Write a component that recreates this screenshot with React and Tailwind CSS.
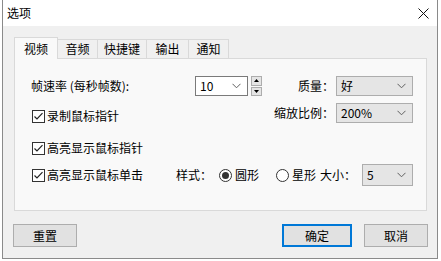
import React from 'react';

const font = { fontFamily: '"Noto Sans CJK SC", "Microsoft YaHei", sans-serif' };

function Chevron() {
  return (
    <svg width="9" height="6" viewBox="0 0 9 6" className="shrink-0">
      <path d="M0.5 0.8 L4.5 4.8 L8.5 0.8" fill="none" stroke="#606060" strokeWidth="1" />
    </svg>
  );
}

function Combo({ value, width, editable, height = 'h-[20px]' }) {
  return (
    <div
      className={`flex items-center justify-between ${height} ${width} pl-[4px] pr-[6px] border ${
        editable ? 'bg-white border-[#7a7a7a]' : 'bg-[#e5e5e5] border-[#adadad]'
      }`}
    >
      <span className="text-[12px] leading-none text-black">{value}</span>
      <Chevron />
    </div>
  );
}

function Spinner() {
  return (
    <div className="flex flex-col gap-[1px] ml-[3px] w-[11px] h-[20px]">
      <div className="flex-1 flex items-center justify-center bg-[#e5e5e5] border border-[#adadad]">
        <svg width="5" height="3" viewBox="0 0 5 3"><path d="M0 3 L2.5 0 L5 3 Z" fill="#000" /></svg>
      </div>
      <div className="flex-1 flex items-center justify-center bg-[#e5e5e5] border border-[#adadad]">
        <svg width="5" height="3" viewBox="0 0 5 3"><path d="M0 0 L2.5 3 L5 0 Z" fill="#000" /></svg>
      </div>
    </div>
  );
}

function Check({ label }) {
  return (
    <div className="flex items-center h-[16px]">
      <div className="w-[13px] h-[13px] border border-[#333] bg-white flex items-center justify-center">
        <svg width="11" height="11" viewBox="0 0 11 11">
          <path d="M1.5 5.5 L4 8 L9.5 2.2" fill="none" stroke="#222" strokeWidth="1.2" />
        </svg>
      </div>
      <span className="ml-[2px] text-[12px] leading-none">{label}</span>
    </div>
  );
}

function Radio({ label, checked }) {
  return (
    <div className="flex items-center">
      <div className="w-[13px] h-[13px] rounded-full border border-[#333] bg-white flex items-center justify-center">
        {checked && <div className="w-[7px] h-[7px] rounded-full bg-[#333]" />}
      </div>
      <span className="ml-[3px] text-[12px] leading-none">{label}</span>
    </div>
  );
}

function Button({ label, primary, width }) {
  return (
    <div
      className={`${width} h-[23px] flex items-center justify-center bg-[#e1e1e1] text-[12px] ${
        primary ? 'border-2 border-[#0078d7]' : 'border border-[#adadad]'
      }`}
    >
      {label}
    </div>
  );
}

export default function App() {
  const tabs = ['音频', '快捷键', '输出', '通知'];
  const tabWidths = ['w-[40px]', 'w-[49px]', 'w-[42px]', 'w-[40px]'];

  return (
    <div className="w-[441px] h-[261px] bg-white text-black" style={font}>
      <div className="ml-[2px] w-[436px] h-[259px] flex flex-col border-x border-b border-[#8a8a8a]">
        {/* Title bar */}
        <div className="h-[26px] shrink-0 bg-white flex items-center justify-between pl-[4px] pr-[8px]">
          <span className="text-[12px] leading-none">选项</span>
          <svg width="11" height="11" viewBox="0 0 11 11">
            <path d="M0.5 0.5 L10.5 10.5 M10.5 0.5 L0.5 10.5" stroke="#111" strokeWidth="1" />
          </svg>
        </div>

        {/* Body */}
        <div className="flex-1 bg-[#f0f0f0] pl-[11px] pr-[10px] pt-[10px]">
          {/* Tabs */}
          <div className="flex items-end h-[22px]">
            <div className="w-[44px] h-[22px] bg-[#f9f9f9] border-x border-t border-[#d9d9d9] flex items-center justify-center text-[12px] relative z-10 -mb-[1px]">
              视频
            </div>
            {tabs.map((t, i) => (
              <div
                key={t}
                className={`${tabWidths[i]} h-[19px] border-t border-r border-[#d9d9d9] flex items-center justify-center text-[12px]`}
              >
                {t}
              </div>
            ))}
          </div>

          {/* Panel */}
          <div className="h-[153px] bg-[#f9f9f9] border border-[#d9d9d9] pl-[16px] pr-[13px] pt-[17px]">
            {/* Row 1 */}
            <div className="flex items-center h-[20px]">
              <span className="text-[12px] leading-none w-[164px]">帧速率 (每秒帧数):</span>
              <Combo value="10" width="w-[53px]" editable />
              <Spinner />
              <span className="ml-auto mr-[2px] text-[12px] leading-none">质量：</span>
              <Combo value="好" width="w-[77px]" />
            </div>

            {/* Row 2 */}
            <div className="flex items-start mt-[7px]">
              <div className="pt-[5px] pl-[1px]">
                <Check label="录制鼠标指针" />
              </div>
              <div className="ml-auto flex items-center h-[20px]">
                <span className="mr-[2px] text-[12px] leading-none">缩放比例：</span>
                <Combo value="200%" width="w-[77px]" />
              </div>
            </div>

            {/* Row 3 */}
            <div className="mt-[16px] pl-[1px]">
              <Check label="高亮显示鼠标指针" />
            </div>

            {/* Row 4 */}
            <div className="flex items-center h-[22px] mt-[8px] pl-[1px]">
              <div className="w-[144px]">
                <Check label="高亮显示鼠标单击" />
              </div>
              <span className="text-[12px] leading-none w-[43px]">样式：</span>
              <div className="w-[57px]">
                <Radio label="圆形" checked />
              </div>
              <Radio label="星形" />
              <span className="ml-[4px] text-[12px] leading-none">大小：</span>
              <div className="ml-auto">
                <Combo value="5" width="w-[51px]" height="h-[22px]" />
              </div>
            </div>
          </div>

          {/* Buttons */}
          <div className="flex items-center mt-[13px]">
            <div className="-ml-[1px]">
              <Button label="重置" width="w-[64px]" />
            </div>
            <div className="ml-auto flex items-center gap-[12px] mr-[-1px]">
              <Button label="确定" width="w-[70px]" primary />
              <Button label="取消" width="w-[64px]" />
            </div>
          </div>
        </div>
      </div>
    </div>
  );
}
